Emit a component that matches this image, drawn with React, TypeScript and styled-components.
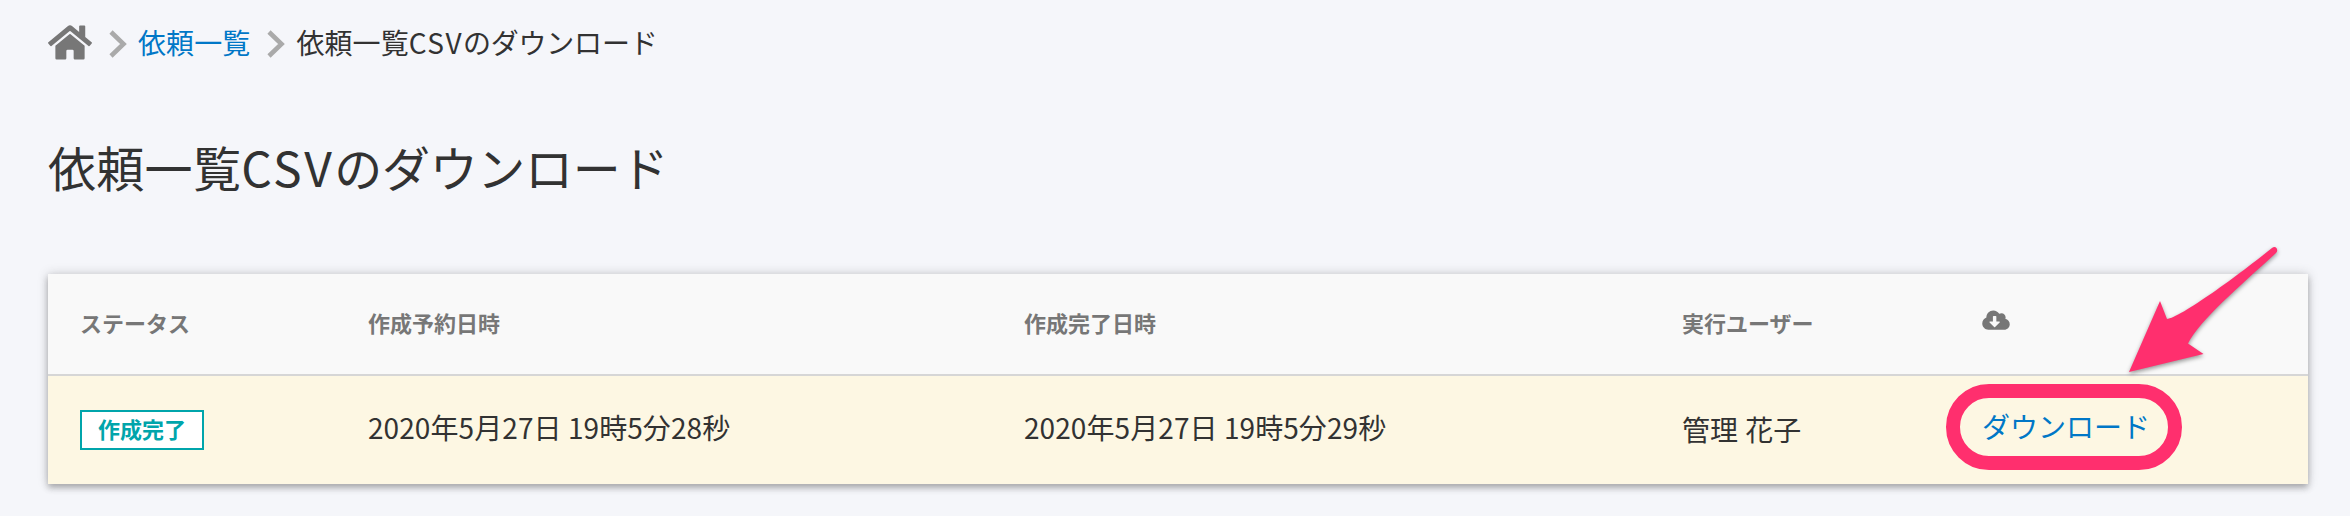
import React from "react";
import styled, { createGlobalStyle } from "styled-components";
import { FaHome, FaCloudDownloadAlt } from "react-icons/fa";

const GlobalStyle = createGlobalStyle`
  * { box-sizing: border-box; }
  body {
    margin: 0;
    background: #f5f6fa;
    color: #323232;
    font-family: "Noto Sans CJK JP", sans-serif;
    font-size: 28px;
    line-height: 40px;
  }
`;

const Page = styled.main`
  height: 516px;
  padding: 22px 42px 0 48px;
  overflow: hidden;
`;

const Breadcrumb = styled.nav`
  display: flex;
  align-items: center;
  height: 40px;
  white-space: nowrap;
`;

const HomeIcon = styled(FaHome)`
  width: 44px;
  height: 39px;
  color: #777;
`;

const Separator = styled.svg`
  width: 18px;
  height: 28px;
  margin: 4px 11px 0 17px;
  fill: none;
  stroke: #aaa;
  stroke-width: 4.6;
`;

const Link = styled.a`
  color: #0077c7;
  text-decoration: none;
`;

const Crumb = styled.span`
  letter-spacing: 0.1px;
`;

const Spaced = styled.span<{ $spacing: number }>`
  letter-spacing: ${(p) => p.$spacing}px;
`;

const Title = styled.h1`
  margin: 68px 0 72px;
  font-size: 48px;
  font-weight: 400;
  line-height: 72px;
  letter-spacing: 0.3px;
  white-space: nowrap;
`;

const Card = styled.div`
  width: 2260px;
  box-shadow: 0 4px 6px rgba(51, 51, 51, 0.3), 0 0 10px rgba(51, 51, 51, 0.22);
`;

const Row = styled.div`
  display: grid;
  grid-template-columns: 288px 656px 658px 300px 1fr;
  align-items: center;
  height: 108px;
  background: #fdf7e3;
  white-space: nowrap;
`;

const HeadRow = styled(Row)`
  height: 102px;
  background: #f9f9f9;
  border-bottom: 2px solid #d6d6d6;
  color: #777;
  font-size: 22px;
  font-weight: 700;
`;

const Cell = styled.div<{ $shift?: number }>`
  display: flex;
  padding: 0 0 ${(p) => p.$shift ?? 0}px 32px;
`;

const DateText = styled.span`
  letter-spacing: 0.08px;
`;

const UserName = styled.span`
  word-spacing: 1px;
`;

const CloudIcon = styled(FaCloudDownloadAlt)`
  width: 28px;
  height: 22px;
`;

const Badge = styled.span`
  display: flex;
  align-items: center;
  justify-content: center;
  width: 124px;
  height: 40px;
  padding-bottom: 4px;
  border: 2px solid #00a5ab;
  background: #fff;
  color: #00a5ab;
  font-size: 22px;
  font-weight: 700;
`;

const Marked = styled.span`
  position: relative;
`;

const Ring = styled.span`
  position: absolute;
  left: -36px;
  top: -22px;
  width: 236px;
  height: 86px;
  border: 14px solid #ff2f6e;
  border-radius: 43px;
  pointer-events: none;
`;

const Arrow = styled.svg`
  position: absolute;
  left: 138px;
  top: -166px;
  width: 160px;
  height: 140px;
  fill: #ff2f6e;
  filter: drop-shadow(0 2px 2px rgba(0, 0, 0, 0.4));
  pointer-events: none;
`;

const Chevron = () => (
  <Separator viewBox="0 0 18 28">
    <path d="M2 2 L14.5 14 L2 26" />
  </Separator>
);

export default function App() {
  return (
    <>
      <GlobalStyle />
      <Page>
        <Breadcrumb>
          <HomeIcon />
          <Chevron />
          <Link href="#">
            <Crumb>依頼一覧</Crumb>
          </Link>
          <Chevron />
          <Crumb>
            依頼一覧<Spaced $spacing={1.4}>CSV</Spaced>
            <Spaced $spacing={-0.2}>のダウンロード</Spaced>
          </Crumb>
        </Breadcrumb>
        <Title>
          依頼一覧<Spaced $spacing={2.5}>CSV</Spaced>
          <Spaced $spacing={-0.3}>のダウンロード</Spaced>
        </Title>
        <Card>
          <HeadRow>
            <Cell $shift={4}>ステータス</Cell>
            <Cell $shift={4}>作成予約日時</Cell>
            <Cell $shift={4}>作成完了日時</Cell>
            <Cell $shift={4}>実行ユーザー</Cell>
            <Cell $shift={8}>
              <CloudIcon />
            </Cell>
          </HeadRow>
          <Row>
            <Cell>
              <Badge>作成完了</Badge>
            </Cell>
            <Cell $shift={7}>
              <DateText>2020年5月27日 19時5分28秒</DateText>
            </Cell>
            <Cell $shift={7}>
              <DateText>2020年5月27日 19時5分29秒</DateText>
            </Cell>
            <Cell $shift={3}>
              <UserName>管理 花子</UserName>
            </Cell>
            <Cell $shift={8}>
              <Marked>
                <Link href="#">ダウンロード</Link>
                <Ring />
                <Arrow viewBox="2120 240 160 140">
                  <path d="M2129 372 L2160 301 L2167 319 C2180 318 2240 274 2272 248 C2276 245 2279 250 2276 253 C2240 286 2200 320 2188 343.500 L2203.500 354 Z" />
                </Arrow>
              </Marked>
            </Cell>
          </Row>
        </Card>
      </Page>
    </>
  );
}
